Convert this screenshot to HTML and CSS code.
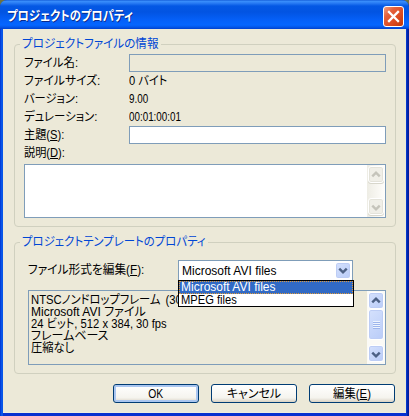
FILE: index.html
```html
<!DOCTYPE html>
<html lang="ja">
<head>
<meta charset="utf-8">
<title>プロジェクトのプロパティ</title>
<link rel="stylesheet" href="styles.css">
</head>
<body>
<div class="window">
  <header class="titlebar">
    <span class="t title">プロジェクトのプロパティ</span>
    <button class="close"><svg width="19" height="19" viewBox="0 0 19 19"><path d="M5 5l9 9M14 5l-9 9" stroke="#fff" stroke-width="2.3" stroke-linecap="square"/></svg></button>
  </header>
  <main class="body">
    <section class="group info">
      <h2 class="legend"><span class="t lg1">プロジェクトファイルの情報</span></h2>
      <div class="row"><span class="label"><span class="t l1">ファイル名:</span></span><div class="field disabled"></div></div>
      <div class="row"><span class="label"><span class="t l2">ファイルサイズ:</span></span><span class="t v1">0 バイト</span></div>
      <div class="row"><span class="label"><span class="t l3">バージョン:</span></span><span class="t v2">9.00</span></div>
      <div class="row"><span class="label"><span class="t l4">デュレーション:</span></span><span class="t v3">00:01:00:01</span></div>
      <div class="row"><span class="label"><span class="t l5">主題(<u>S</u>):</span></span><div class="field"></div></div>
      <div class="row"><span class="label"><span class="t l6">説明(<u>D</u>):</span></span></div>
      <div class="memo">
        <div class="scroll off">
          <span class="sb"><svg width="15" height="16" viewBox="0 0 15 16"><path d="M3.5 9.5l4-4 4 4"/></svg></span>
          <span class="sb"><svg width="15" height="16" viewBox="0 0 15 16"><path d="M3.5 6.5l4 4 4-4"/></svg></span>
        </div>
      </div>
    </section>
    <section class="group template">
      <h2 class="legend"><span class="t lg2">プロジェクトテンプレートのプロパティ</span></h2>
      <div class="format">
        <span class="fl"><span class="t l7">ファイル形式を編集(<u>F</u>):</span></span>
        <div class="combo">
          <span class="t en">Microsoft AVI files</span>
          <span class="sb"><svg width="15" height="17" viewBox="0 0 15 17"><path d="M3.5 6.5l4 4 4-4"/></svg></span>
          <div class="menu">
            <div class="opt sel"><span class="t en">Microsoft AVI files</span></div>
            <div class="opt"><span class="t mp">MPEG files</span></div>
          </div>
        </div>
      </div>
      <div class="list">
        <div class="lines">
          <div><span class="t n1">NTSCノンドロップフレーム (30</span></div>
          <div><span class="t n2">Microsoft AVI ファイル</span></div>
          <div><span class="t n3">24 ビット, 512 x 384, 30 fps</span></div>
          <div><span class="t n4">フレームベース</span></div>
          <div><span class="t n5">圧縮なし</span></div>
        </div>
        <div class="scroll">
          <span class="sb"><svg width="15" height="16" viewBox="0 0 15 16"><path d="M3.5 9.5l4-4 4 4"/></svg></span>
          <span class="sb thumb"><i></i></span>
          <span class="sb last"><svg width="15" height="16" viewBox="0 0 15 16"><path d="M3.5 6.5l4 4 4-4"/></svg></span>
        </div>
      </div>
    </section>
    <footer class="actions">
      <button class="btn default"><span class="t ok">OK</span></button>
      <button class="btn"><span class="t ca">キャンセル</span></button>
      <button class="btn"><span class="t ed">編集(<u>E</u>)</span></button>
    </footer>
  </main>
</div>
</body>
</html>
```
FILE: styles.css
```css
* { box-sizing: border-box; }
body {
  margin: 0; background: #6f7340; color: #000; overflow: hidden;
  font: 12px/18px "Liberation Sans", "Noto Sans CJK JP", sans-serif;
  font-feature-settings: "palt";
}
button { font: inherit; font-feature-settings: inherit; color: inherit; padding: 0; }
svg { display: block; fill: none; }
.t { display: inline-block; white-space: pre; transform-origin: 0 50%; }
.window {
  width: 409px; height: 416px; padding: 0 3px 3px; border-radius: 7px 7px 0 0;
  background: linear-gradient(90deg, #0025c8 0, #0855e8 1px, #0855e8 3px, transparent 3px, transparent 406px, #0540dd 406px, #001c9c 408px), #0831d0;
  display: flex; flex-direction: column; overflow: hidden;
}
.titlebar {
  height: 29px; margin: 0 -3px; padding: 3px 5px 0 7px; flex: none;
  display: flex; justify-content: space-between; align-items: center;
  background: linear-gradient(#0a50d0 0, #3c91fc 1px, #2a7df5 3px, #0458e4 6px, #0254e2 12px, #0560f8 20px, #0566ff 25px, #0458ea 27px, #0040cf 29px);
}
.title { font-size: 13px; font-weight: 700; color: #fff; text-shadow: 1px 1px 0 #0a2a8a; transform: scaleX(.87); }
.close {
  width: 21px; height: 21px; border: 1px solid #fff; border-radius: 3px;
  background: linear-gradient(135deg, #f0a080 0, #e4603c 30%, #dc4a20 65%, #c03808 100%);
}
.body { flex: 1; background: #ece9d8; padding: 15px 9px 0 11px; border-bottom: 1px solid #fff3; }
.group { position: relative; border: 1px solid #d0d0bf; border-radius: 4px; width: 382px; }
.info { height: 183px; padding: 9px 10px 0 9px; }
.template { height: 132px; margin-top: 15px; padding: 17px 10px 0 13px; }
.legend {
  position: absolute; top: -10px; left: 5px; margin: 0; padding: 0 2px;
  font: inherit; color: #0046d5; background: #ece9d8;
}
.lg1 { transform: scaleX(.965); margin-right: -4px; }
.lg2 { transform: scaleX(.95); margin-right: -9px; }
.l1, .l4 { transform: scaleX(.95); }
.l2 { transform: scaleX(.985); }
.l3 { transform: scaleX(.94); }
.l5, .l6, .v1 { transform: scaleX(.93); }
.v2, .v3 { transform: scaleX(.82); }
.l7 { transform: scaleX(.975); }
.mp { transform: scaleX(.93); }
.n1 { transform: scaleX(.94); word-spacing: 2px; }
.n3 { transform: scaleX(.935); }
.n5 { transform: scaleX(.94); }
.ok { transform: scaleX(.86); }
.ed { transform: scaleX(.95); }
.row { height: 18px; display: flex; align-items: center; }
.label { width: 105px; flex: none; }
.field { flex: none; width: 257px; height: 18px; border: 1px solid #7f9db9; background: #fff; }
.field.disabled { background: #ece9d8; }
.memo, .list { border: 1px solid #7f9db9; display: flex; justify-content: flex-end; }
.memo { margin-top: 2px; width: 362px; height: 54px; background: #fff; }
.scroll { width: 18px; padding: 1px 1px 2px; display: flex; flex-direction: column; background: #fbfaf6; }
.scroll.off { background: linear-gradient(90deg, #eeede5, #fffefb); justify-content: space-between; }
.sb {
  width: 16px; height: 17px; flex: none; border: 1px solid #fff; border-radius: 3px;
  background: linear-gradient(135deg, #d5e1fd, #b9ccf8); box-shadow: inset 0 0 0 1px #bdcdf5;
  display: flex; align-items: center; justify-content: center;
}
.sb path { stroke: #4d6185; stroke-width: 2.6; }
.off .sb { background: #f0efe8; box-shadow: inset 0 0 0 1px #e4e3da, 0 1px 0 #d8d7cc; }
.off .sb path { stroke: #c5c4bb; }
.format { display: flex; height: 19px; align-items: center; }
.fl { width: 150px; flex: none; }
.combo {
  position: relative; width: 175px; height: 21px; margin-top: 2px; border: 1px solid #7f9db9; background: #fff;
  padding: 0 1px 0 3px; display: flex; align-items: center; justify-content: space-between;
}
.menu {
  position: absolute; z-index: 2; left: -1px; top: 19px; width: 176px; height: 27px;
  border: 1px solid #000; background: #fff;
}
.opt { height: 12px; line-height: 12px; padding-left: 2px; }
.opt .t { display: block; }
.opt.sel { height: 13px; line-height: 13px; background: #316ac5; color: #fff; outline: 1px dotted #e09a3a; outline-offset: -1px; }
.list { margin-top: 11px; width: 358px; height: 75px; justify-content: space-between; }
.lines { padding: 3px 0 0 2px; line-height: 12px; }
.lines div { height: 12px; }
.thumb { height: 31px; }
.thumb i { width: 7px; height: 8px; background: repeating-linear-gradient(#eef4fe 0 1px, #9db5ec 1px 2px); }
.last { margin-top: auto; }
.actions { display: flex; gap: 12px; padding: 10px 0 0 99px; }
.btn {
  width: 86px; height: 19px; line-height: 16px; border: 1px solid #003c74; border-radius: 3px;
  background: linear-gradient(#fff, #f5f4ee 75%, #d9d2c4);
}
.btn .t { transform-origin: 50% 50%; }
.default { box-shadow: inset 0 0 0 2px #aac6f0; }
```
